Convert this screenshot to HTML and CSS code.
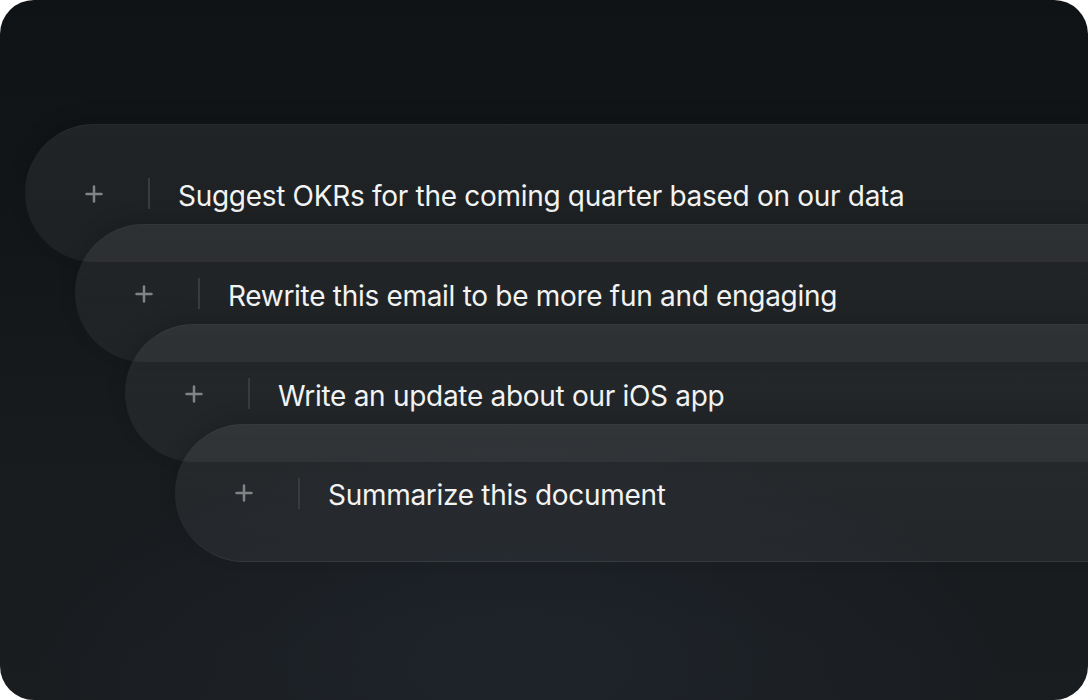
FILE: index.html
```html
<!DOCTYPE html>
<html lang="en">
<head>
<meta charset="utf-8">
<title>Prompts</title>
<link rel="stylesheet" href="styles.css">
</head>
<body>
<div class="card">
  <div class="stack">
    <div class="pill pill-1">
      <svg class="plus" viewBox="0 0 18 18" width="18" height="18"><path d="M9 1.5v15M1.5 9h15" stroke="currentColor" stroke-width="2.5" stroke-linecap="round" fill="none"/></svg>
      <span class="divider"></span>
      <span class="label">Suggest OKRs for the coming quarter based on our data</span>
    </div>
    <div class="pill pill-2">
      <svg class="plus" viewBox="0 0 18 18" width="18" height="18"><path d="M9 1.5v15M1.5 9h15" stroke="currentColor" stroke-width="2.5" stroke-linecap="round" fill="none"/></svg>
      <span class="divider"></span>
      <span class="label">Rewrite this email to be more fun and engaging</span>
    </div>
    <div class="pill pill-3">
      <svg class="plus" viewBox="0 0 18 18" width="18" height="18"><path d="M9 1.5v15M1.5 9h15" stroke="currentColor" stroke-width="2.5" stroke-linecap="round" fill="none"/></svg>
      <span class="divider"></span>
      <span class="label">Write an update about our iOS app</span>
    </div>
    <div class="pill pill-4">
      <svg class="plus" viewBox="0 0 18 18" width="18" height="18"><path d="M9 1.5v15M1.5 9h15" stroke="currentColor" stroke-width="2.5" stroke-linecap="round" fill="none"/></svg>
      <span class="divider"></span>
      <span class="label">Summarize this document</span>
    </div>
  </div>
</div>
</body>
</html>
```
FILE: styles.css
```css
html, body {
  margin: 0;
  padding: 0;
  background: #ffffff;
}

.card {
  width: 1088px;
  height: 700px;
  border-radius: 34px;
  overflow: hidden;
  box-sizing: border-box;
  padding-top: 124px;
  background:
    radial-gradient(ellipse 640px 300px at 520px 660px, rgba(36, 44, 56, 0.45), rgba(36, 44, 56, 0) 75%),
    linear-gradient(180deg, #101315 0%, #121517 25%, #181b1e 65%, #1a1d20 100%);
  font-family: Inter, "Liberation Sans", sans-serif;
}

.stack {
  display: flex;
  flex-direction: column;
}

.pill {
  height: 138px;
  box-sizing: border-box;
  border-radius: 69px 0 0 69px;
  display: flex;
  align-items: center;
  padding-left: 60px;
  margin-top: -38px;
  border-top: 1px solid rgba(255, 255, 255, 0.045);
  background: linear-gradient(180deg, rgba(255, 255, 255, 0.07) 0%, rgba(255, 255, 255, 0.055) 60%, rgba(255, 255, 255, 0.05) 100%);
  box-shadow: 0 -6px 18px rgba(0, 0, 0, 0.15);
}

.pill-1 { margin-top: 0; margin-left: 25px; }
.pill-2 { margin-left: 75px; }
.pill-3 { margin-left: 125px; }
.pill-4 {
  margin-left: 175px;
  border-bottom: 1px solid rgba(255, 255, 255, 0.06);
}

.plus {
  color: #818386;
  flex: none;
}

.divider {
  width: 2px;
  height: 31px;
  background: #393b3e;
  margin-left: 45px;
  flex: none;
}

.label {
  margin-left: 28px;
  padding-top: 4px;
  color: #f2f3f3;
  font-size: 28px;
  letter-spacing: -0.3px;
  white-space: nowrap;
  line-height: 1;
}
```
